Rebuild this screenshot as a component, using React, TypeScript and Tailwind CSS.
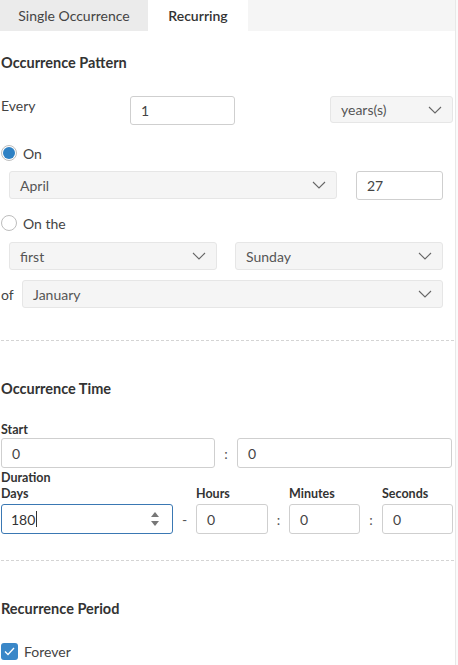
import React from "react";

const Chevron = () => (
  <svg width="14" height="8" viewBox="0 0 14 8" fill="none" className="shrink-0">
    <path d="M1 1l6 6 6-6" stroke="#666" strokeWidth="1.1" />
  </svg>
);

const Select = ({ value, className }: { value: string; className: string }) => (
  <div
    className={`flex items-center justify-between rounded-[3px] border border-[#e6e6e6] bg-[#f5f5f5] pl-[10px] pr-[10px] text-[14px] text-[#555] ${className}`}
  >
    <span>{value}</span>
    <Chevron />
  </div>
);

const Input = ({ value, className }: { value: string; className: string }) => (
  <div
    className={`flex items-center rounded-[3px] border border-[#cfcfcf] bg-white pl-[10px] text-[14px] text-[#444] ${className}`}
  >
    {value}
  </div>
);

const Dashed = () => <div className="w-[453px] border-t border-dashed border-[#d4d4d4]" />;

export default function App() {
  return (
    <div
      className="relative h-[665px] w-[458px] overflow-hidden bg-white text-[#333]"
      style={{ fontFamily: "Lato, 'Open Sans', sans-serif" }}
    >
      <div className="absolute right-0 top-0 h-full w-[3px] border-l border-[#e8e8e8] bg-[#fafafa]" />
      <div className="w-[455px]">
        {/* Tabs */}
        <div className="flex h-[31px] bg-[#f5f5f5]">
          <div className="flex w-[148px] items-center justify-center bg-[#ebebeb] text-[14px] text-[#444]">
            Single Occurrence
          </div>
          <div className="flex w-[100px] items-center justify-center bg-white text-[14px] font-semibold text-[#333]">
            Recurring
          </div>
        </div>

        <div className="pl-[1px]">
          <div className="mt-[22px] h-[20px] text-[14.5px] font-bold leading-[20px] text-[#333]">
            Occurrence Pattern
          </div>

          {/* Every row */}
          <div className="mt-[23px] flex items-start">
            <div className="w-[129px] text-[14px] leading-[20px] text-[#444]">Every</div>
            <Input value="1" className="h-[29px] w-[105px]" />
            <div className="flex-1" />
            <Select value="years(s)" className="h-[27px] w-[123px] mr-[2px]" />
          </div>

          {/* On */}
          <div className="mt-[18px] flex h-[20px] items-center gap-[6px]">
            <div className="flex h-[16px] w-[16px] items-center justify-center rounded-full border border-[#bdbdbd] bg-white">
              <div className="h-[12px] w-[12px] rounded-full bg-[#2e81c4]" />
            </div>
            <span className="text-[14px] text-[#444]">On</span>
          </div>
          <div className="mt-[8px] flex items-start pl-[8px]">
            <Select value="April" className="h-[28px] w-[328px]" />
            <Input value="27" className="ml-[19px] h-[29px] w-[87px]" />
          </div>

          {/* On the */}
          <div className="mt-[13px] flex h-[20px] items-center gap-[6px]">
            <div className="h-[16px] w-[16px] rounded-full border border-[#bdbdbd] bg-white" />
            <span className="text-[14px] text-[#444]">On the</span>
          </div>
          <div className="mt-[9px] flex pl-[8px]">
            <Select value="first" className="h-[28px] w-[208px]" />
            <Select value="Sunday" className="ml-[18px] h-[28px] w-[208px]" />
          </div>
          <div className="mt-[10px] flex items-center">
            <span className="w-[21px] text-[14px] text-[#444]">of</span>
            <Select value="January" className="h-[28px] w-[421px]" />
          </div>

          <div className="mt-[32px]">
            <Dashed />
          </div>

          <div className="mt-[38px] h-[20px] text-[14.5px] font-bold leading-[20px] text-[#333]">
            Occurrence Time
          </div>

          <div className="mt-[23px] h-[16px] text-[12.5px] font-bold leading-[16px] text-[#333]">Start</div>
          <div className="flex items-center">
            <Input value="0" className="h-[30px] w-[214px] pl-[8px]" />
            <span className="w-[22px] text-center text-[14px] text-[#555]">:</span>
            <Input value="0" className="h-[30px] w-[215px] pl-[8px]" />
          </div>

          <div className="mt-[2px] h-[16px] text-[12.5px] font-bold leading-[16px] text-[#333]">Duration</div>
          <div className="flex">
            <div className="flex flex-col">
              <div className="h-[16px] text-[12.5px] font-bold leading-[16px] text-[#333]">Days</div>
              <div className="mt-[2px] flex h-[30px] w-[172px] items-center rounded-[3px] border border-[#3a78b3] bg-white pl-[9px] pr-[12px] text-[14px] text-[#333]">
                <span>180</span>
                <span className="ml-[1px] h-[16px] w-[1px] bg-[#333]" />
                <div className="flex-1" />
                <svg width="10" height="18" viewBox="0 0 10 18">
                  <path d="M5 2L9 7H1z" fill="#777" />
                  <path d="M5 16L9 11H1z" fill="#777" />
                </svg>
              </div>
            </div>
            <div className="flex flex-col">
              <div className="h-[16px]" />
              <div className="mt-[2px] flex h-[30px] w-[23px] items-center justify-center text-[14px] text-[#555]">-</div>
            </div>
            <div className="flex flex-col">
              <div className="h-[16px] text-[12.5px] font-bold leading-[16px] text-[#333]">Hours</div>
              <Input value="0" className="mt-[2px] h-[30px] w-[72px] pl-[9px]" />
            </div>
            <div className="flex flex-col">
              <div className="h-[16px]" />
              <div className="mt-[2px] flex h-[30px] w-[21px] items-center justify-center text-[14px] text-[#555]">:</div>
            </div>
            <div className="flex flex-col">
              <div className="h-[16px] text-[12.5px] font-bold leading-[16px] text-[#333]">Minutes</div>
              <Input value="0" className="mt-[2px] h-[30px] w-[71px] pl-[9px]" />
            </div>
            <div className="flex flex-col">
              <div className="h-[16px]" />
              <div className="mt-[2px] flex h-[30px] w-[22px] items-center justify-center text-[14px] text-[#555]">:</div>
            </div>
            <div className="flex flex-col">
              <div className="h-[16px] text-[12.5px] font-bold leading-[16px] text-[#333]">Seconds</div>
              <Input value="0" className="mt-[2px] h-[30px] w-[71px] pl-[9px]" />
            </div>
          </div>

          <div className="mt-[26px]">
            <Dashed />
          </div>

          <div className="mt-[38px] h-[20px] text-[14.5px] font-bold leading-[20px] text-[#333]">
            Recurrence Period
          </div>

          <div className="mt-[22px] flex h-[20px] items-center gap-[6px]">
            <div className="flex h-[17px] w-[17px] items-center justify-center rounded-[3px] bg-[#3a87c8]">
              <svg width="11" height="9" viewBox="0 0 11 9" fill="none">
                <path d="M1 4.5l3 3L10 1" stroke="white" strokeWidth="1.3" />
              </svg>
            </div>
            <span className="text-[14px] text-[#444]">Forever</span>
          </div>
        </div>
      </div>
    </div>
  );
}
